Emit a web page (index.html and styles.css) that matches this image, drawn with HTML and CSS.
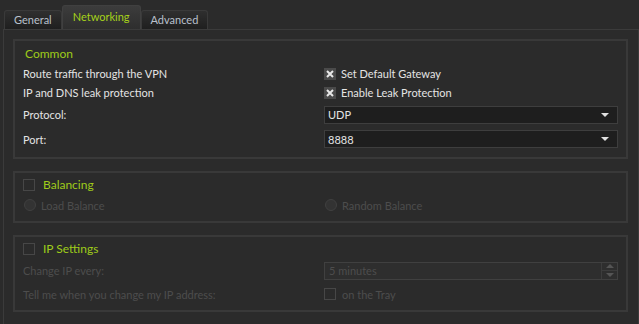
FILE: index.html
```html
<!DOCTYPE html>
<html lang="en">
<head>
    <meta charset="UTF-8">
    <title>VPN Settings</title>
    <link rel="stylesheet" href="styles.css">
</head>
<body>
    <div class="window">
        <div class="tabs">
            <div class="tab">General</div>
            <div class="tab active">Networking</div>
            <div class="tab">Advanced</div>
        </div>

        <div class="pane">
            <!-- Common -->
            <div class="group common">
                <div class="group-title">Common</div>
                <div class="grid">
                    <div class="label">Route traffic through the VPN</div>
                    <div class="check on">
                        <svg class="box" width="12" height="12" viewBox="0 0 12 12"><rect width="12" height="12" fill="#4a4a4a"/><path d="M3 3L9 9M9 3L3 9" stroke="#e8e8e8" stroke-width="2"/></svg>
                        <span>Set Default Gateway</span>
                    </div>
                    <div class="label">IP and DNS leak protection</div>
                    <div class="check on">
                        <svg class="box" width="12" height="12" viewBox="0 0 12 12"><rect width="12" height="12" fill="#4a4a4a"/><path d="M3 3L9 9M9 3L3 9" stroke="#e8e8e8" stroke-width="2"/></svg>
                        <span>Enable Leak Protection</span>
                    </div>
                    <div class="label tall">Protocol:</div>
                    <div class="tall"><div class="combo"><span>UDP</span><span class="arrow"></span></div></div>
                    <div class="label tall">Port:</div>
                    <div class="tall"><div class="combo"><span>8888</span><span class="arrow"></span></div></div>
                </div>
            </div>

            <!-- Balancing -->
            <div class="group balancing">
                <div class="group-head">
                    <span class="cb"></span>
                    <span class="group-title">Balancing</span>
                </div>
                <div class="grid">
                    <div class="radio-row"><span class="radio"></span><span>Load Balance</span></div>
                    <div class="radio-row"><span class="radio"></span><span>Random Balance</span></div>
                </div>
            </div>

            <!-- IP Settings -->
            <div class="group ipset">
                <div class="group-head">
                    <span class="cb"></span>
                    <span class="group-title">IP Settings</span>
                </div>
                <div class="grid">
                    <div class="label dim spin-row">Change IP every:</div>
                    <div class="spin-row">
                        <div class="spin">
                            <span>5 minutes</span>
                            <div class="spin-btns">
                                <div class="spin-btn"><span class="up"></span></div>
                                <div class="spin-btn"><span class="down"></span></div>
                            </div>
                        </div>
                    </div>
                    <div class="label dim">Tell me when you change my IP address:</div>
                    <div class="check dim"><span class="cb small"></span><span>on the Tray</span></div>
                </div>
            </div>
        </div>
    </div>
</body>
</html>
```

FILE: styles.css
```css
body {
    margin: 0;
    background: #2b2b2b;
    font-family: Lato, "Noto Sans", sans-serif;
    font-size: 11px;
    color: #e4e4e4;
}
.window {
    width: 639px;
    height: 324px;
    overflow: hidden;
    padding: 5px 0 0 3px;
    box-sizing: border-box;
}
.tabs {
    display: flex;
    align-items: flex-end;
    padding-left: 1px;
    height: 24px;
}
.tab {
    height: 18px;
    line-height: 18px;
    padding: 0 9px;
    color: #b9c0cc;
    border: 1px solid #3a3a3a;
    border-bottom: none;
    border-radius: 3px 3px 0 0;
    background: linear-gradient(#2f2f2f, #1f1f1f);
}
.tab.active {
    height: 23px;
    line-height: 22px;
    padding: 0 10px;
    color: #a6d21a;
    background: linear-gradient(#3c3c3c, #2e2e2e);
    border-color: #404040;
}
.pane {
    border: 1px solid #3b3b3b;
    width: 636px;
    height: 320px;
    padding: 9px 10px 0 9px;
    box-sizing: border-box;
    display: flex;
    flex-direction: column;
    gap: 12px;
}
.group {
    border: 2px solid #393939;
    padding: 4px 8px 0 8px;
    box-sizing: border-box;
    flex: none;
}
.group-title {
    color: #9fcc1a;
    font-size: 12px;
    line-height: 18px;
}
.common .group-title {
    padding-left: 2px;
}
.grid {
    display: grid;
    grid-template-columns: 301px 1fr;
    align-items: center;
}
.common {
    height: 120px;
}
.common .grid {
    grid-template-rows: 19px 19px 25px 24px;
    margin-top: 1px;
}
.label {
    white-space: nowrap;
}
.check {
    display: flex;
    align-items: center;
    gap: 5px;
}
.box {
    display: block;
}
.combo {
    height: 16px;
    border: 1px solid #3e3e3e;
    background: #1e1e1e;
    display: flex;
    align-items: center;
    justify-content: space-between;
    padding: 0 8px 0 3px;
}
.arrow {
    width: 0;
    height: 0;
    border-left: 4px solid transparent;
    border-right: 4px solid transparent;
    border-top: 4px solid #e0e0e0;
}
.group-head {
    display: flex;
    align-items: center;
    gap: 8px;
    height: 18px;
    margin-top: -1px;
}
.cb {
    width: 10px;
    height: 10px;
    border: 1px solid #474747;
    background: #2b2b2b;
    display: inline-block;
}
.balancing {
    height: 52px;
}
.balancing .grid {
    margin-top: 2px;
    height: 18px;
}
.radio-row {
    display: flex;
    align-items: center;
    gap: 5px;
    color: #4d4d4d;
    padding-left: 1px;
}
.radio {
    width: 10px;
    height: 10px;
    border-radius: 50%;
    border: 1px solid #404040;
    background: #333333;
}
.ipset {
    height: 77px;
}
.ipset .grid {
    grid-template-rows: 25px 22px;
}
.dim {
    color: #4d4d4d;
}
.check.dim {
    gap: 6px;
}
.spin {
    height: 16px;
    border: 1px solid #404040;
    background: #2e2e2e;
    display: flex;
    align-items: center;
    justify-content: space-between;
    padding-left: 4px;
    color: #4d4d4d;
}
.spin-btns {
    width: 15px;
    height: 16px;
    border-left: 1px solid #3c3c3c;
    display: flex;
    flex-direction: column;
}
.spin-btn {
    flex: 1;
    display: flex;
    align-items: center;
    justify-content: center;
}
.spin-btn + .spin-btn {
    border-top: 1px solid #3c3c3c;
}
.up {
    border-left: 4px solid transparent;
    border-right: 4px solid transparent;
    border-bottom: 4px solid #555555;
}
.down {
    border-left: 4px solid transparent;
    border-right: 4px solid transparent;
    border-top: 4px solid #555555;
}
```
